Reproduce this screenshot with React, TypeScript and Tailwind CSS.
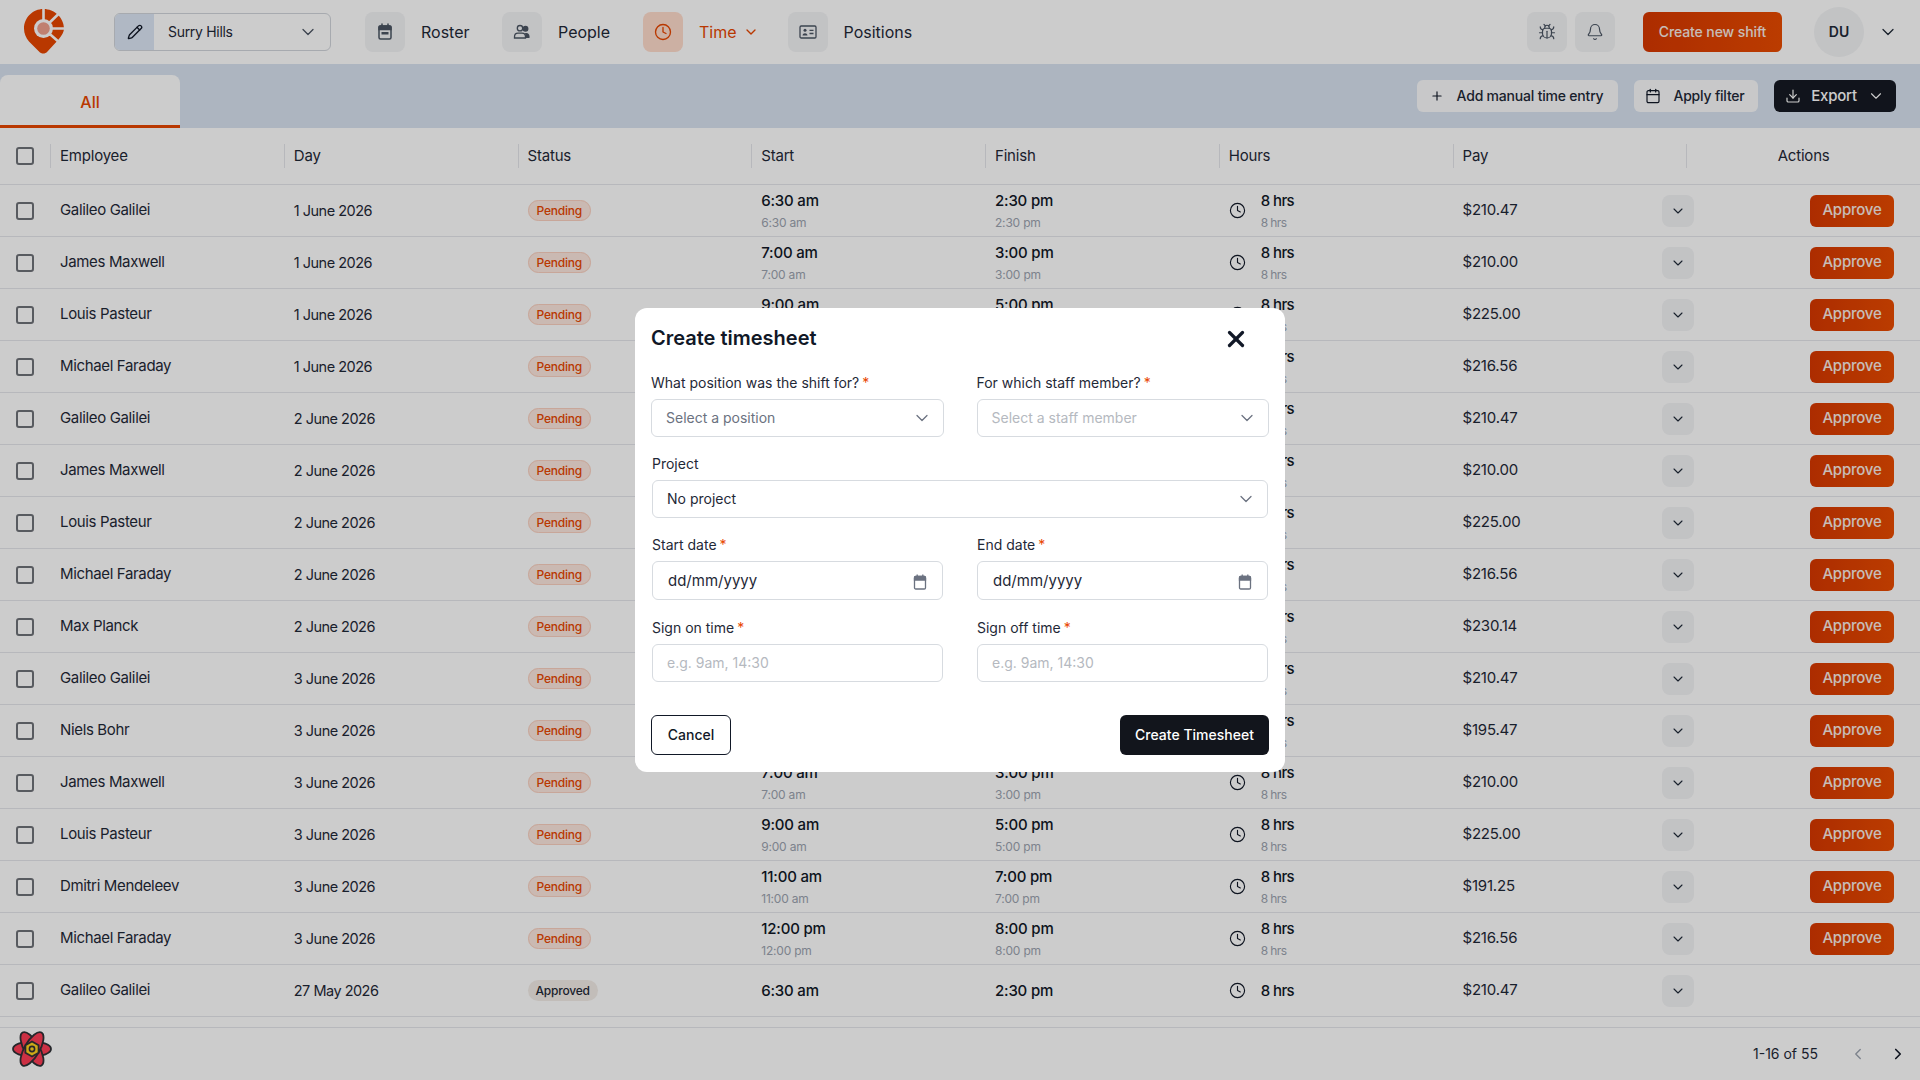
import { Bell, Bug, Calendar, ChevronDown, ChevronLeft, ChevronRight, Clock, Download, Pencil, Plus, X } from "lucide-react";
import { ReactNode } from "react";

type Row = { name: string; day: string; start: string; finish: string; pay: string; approved?: boolean };

const rows: Row[] = [
  { name: "Galileo Galilei", day: "1 June 2026", start: "6:30 am", finish: "2:30 pm", pay: "$210.47" },
  { name: "James Maxwell", day: "1 June 2026", start: "7:00 am", finish: "3:00 pm", pay: "$210.00" },
  { name: "Louis Pasteur", day: "1 June 2026", start: "9:00 am", finish: "5:00 pm", pay: "$225.00" },
  { name: "Michael Faraday", day: "1 June 2026", start: "12:00 pm", finish: "8:00 pm", pay: "$216.56" },
  { name: "Galileo Galilei", day: "2 June 2026", start: "6:30 am", finish: "2:30 pm", pay: "$210.47" },
  { name: "James Maxwell", day: "2 June 2026", start: "7:00 am", finish: "3:00 pm", pay: "$210.00" },
  { name: "Louis Pasteur", day: "2 June 2026", start: "9:00 am", finish: "5:00 pm", pay: "$225.00" },
  { name: "Michael Faraday", day: "2 June 2026", start: "12:00 pm", finish: "8:00 pm", pay: "$216.56" },
  { name: "Max Planck", day: "2 June 2026", start: "10:00 am", finish: "6:00 pm", pay: "$230.14" },
  { name: "Galileo Galilei", day: "3 June 2026", start: "6:30 am", finish: "2:30 pm", pay: "$210.47" },
  { name: "Niels Bohr", day: "3 June 2026", start: "8:00 am", finish: "4:00 pm", pay: "$195.47" },
  { name: "James Maxwell", day: "3 June 2026", start: "7:00 am", finish: "3:00 pm", pay: "$210.00" },
  { name: "Louis Pasteur", day: "3 June 2026", start: "9:00 am", finish: "5:00 pm", pay: "$225.00" },
  { name: "Dmitri Mendeleev", day: "3 June 2026", start: "11:00 am", finish: "7:00 pm", pay: "$191.25" },
  { name: "Michael Faraday", day: "3 June 2026", start: "12:00 pm", finish: "8:00 pm", pay: "$216.56" },
  { name: "Galileo Galilei", day: "27 May 2026", start: "6:30 am", finish: "2:30 pm", pay: "$210.47", approved: true },
];

const columns = ["Employee", "Day", "Status", "Start", "Finish", "Hours", "Pay"];

const Logo = () => (
  <svg width="40" height="45" viewBox="0 0 40 45" className="ml-[24px] mt-[9px] shrink-0 self-start">
    <path d="M19.5 0C8.7 0 0 8.7 0 19.5c0 5 2 9.5 5 13L15 42.5c2.5 2.8 6 2.8 8.5 0l11-12C38 26 40 23 40 19.5 40 8.7 30.3 0 19.5 0Z" fill="#e84600" />
    <path d="M19.5 19.5V-2M19.5 19.5L36 3.5M19.5 19.5H42M19.5 19.5L36 34" stroke="#fff" strokeWidth="2.6" fill="none" />
    <circle cx="19.5" cy="19.5" r="9.5" fill="#fff" />
    <circle cx="19.5" cy="19.5" r="6.3" fill="#f0a08c" />
  </svg>
);

const AtomLogo = () => (
  <svg width="40" height="36" viewBox="0 0 40 36" className="ml-[12px] mt-[3px]">
    <g fill="#ff3d55" stroke="#2f3136" strokeWidth="1.8">
      <ellipse cx="20" cy="18" rx="19" ry="7.5" />
      <ellipse cx="20" cy="18" rx="19" ry="7.5" transform="rotate(60 20 18)" />
      <ellipse cx="20" cy="18" rx="19" ry="7.5" transform="rotate(120 20 18)" />
    </g>
    <polygon points="20,9.5 27.5,13.7 27.5,22.3 20,26.5 12.5,22.3 12.5,13.7" fill="#2f3136" />
    <polygon points="20,11.5 25.7,14.8 25.7,21.2 20,24.5 14.3,21.2 14.3,14.8" fill="#ffd21f" />
    <circle cx="20" cy="18" r="3.4" fill="#2f3136" />
    <circle cx="20" cy="18" r="1.8" fill="#ffd21f" />
  </svg>
);

const RosterIcon = () => (
  <svg width="20" height="20" viewBox="0 0 20 20" fill="none" stroke="#4b5563" strokeWidth="1.5">
    <rect x="4" y="4" width="12" height="13" rx="1.5" />
    <path d="M4 7.5h12V5.2A1.2 1.2 0 0 0 14.8 4H5.2A1.2 1.2 0 0 0 4 5.2Z" fill="#4b5563" />
    <path d="M7 2v2.500M13 2v2.500" strokeLinecap="round" />
    <rect x="6.5" y="10" width="7" height="2.5" fill="#4b5563" stroke="none" />
  </svg>
);

const PeopleIcon = () => (
  <svg width="20" height="20" viewBox="0 0 20 20" fill="none" stroke="#4b5563" strokeWidth="1.3">
    <circle cx="8" cy="6.2" r="2.7" />
    <circle cx="13.5" cy="6.8" r="2.3" fill="#4b5563" />
    <path d="M2.5 16v-1c0-2.2 1.500-3.800 3.500-3.800h4c2 0 3.500 1.600 3.500 3.800v1Z" />
    <path d="M13 11h1.500c1.700 0 3 1.400 3 3.200V16h-3.500Z" fill="#4b5563" stroke="none" />
  </svg>
);

const PositionsIcon = () => (
  <svg width="20" height="20" viewBox="0 0 20 20" fill="none" stroke="#4b5563" strokeWidth="1.3">
    <rect x="2" y="4" width="16" height="12" rx="1.2" />
    <circle cx="7" cy="8.3" r="1.5" fill="#4b5563" stroke="none" />
    <path d="M4.5 13.500c.2-1.500 1.200-2.300 2.500-2.300s2.300.8 2.500 2.300Z" fill="#4b5563" stroke="none" />
    <path d="M11.5 8.3h4M11.5 11.500h4" />
  </svg>
);

const DateIcon = () => (
  <svg width="14" height="18" viewBox="0 0 14 18" fill="none" stroke="#6b7280" strokeWidth="1.3">
    <rect x="1.5" y="3.5" width="11" height="12.5" rx="1.2" />
    <path d="M1.5 7V4.700a1.200 1.200 0 0 1 1.200-1.200h8.600a1.200 1.200 0 0 1 1.200 1.200V7Z" fill="#6b7280" />
    <path d="M4.200 1.500v2.500M9.800 1.500v2.500" />
  </svg>
);

const Tile = ({ children, active }: { children: ReactNode; active?: boolean }) => (
  <div className={`flex h-10 w-10 items-center justify-center rounded-lg ${active ? "bg-[#ffdccc]" : "bg-[#f3f4f6]"}`}>
    {children}
  </div>
);

const Checkbox = () => <div className="h-[18px] w-[18px] rounded-[3px] border-2 border-[#6f7278] bg-white" />;

const Header = () => (
  <header className="flex h-16 shrink-0 bg-white">
    <Logo />
    <div className="ml-[50px] mt-[13px] flex h-[38px] w-[217px] overflow-hidden rounded-md border border-[#d1d5db] text-sm text-[#1f2937]">
      <div className="flex w-[39px] items-center justify-center bg-[#dce6f5]">
        <Pencil size={16} color="#111827" />
      </div>
      <div className="flex flex-1 items-center justify-between pl-[14px] pr-[12px]">
        <span className="tracking-[-0.3px]">Surry Hills</span>
        <ChevronDown size={20} strokeWidth={1.5} color="#4b5563" />
      </div>
    </div>
    <nav className="ml-[34px] mt-3 flex h-10 items-center text-base text-[#1f2937]">
      <Tile><RosterIcon /></Tile>
      <span className="ml-4 w-[81px]">Roster</span>
      <Tile><PeopleIcon /></Tile>
      <span className="ml-4 w-[85px]">People</span>
      <Tile active><Clock size={18} color="#e84600" strokeWidth={1.8} /></Tile>
      <span className="ml-4 text-[#e84600]">Time</span>
      <ChevronDown size={16} color="#e84600" className="ml-[6px] mr-[29px]" />
      <Tile><PositionsIcon /></Tile>
      <span className="ml-4">Positions</span>
    </nav>
    <div className="ml-auto mt-3 flex h-10 items-start">
      <Tile><Bug size={18} strokeWidth={1.6} color="#4b5563" /></Tile>
      <div className="ml-2"><Tile><Bell size={18} strokeWidth={1.6} color="#4b5563" /></Tile></div>
      <button className="ml-7 h-10 w-[139px] rounded-md bg-gradient-to-r from-[#d83800] to-[#ea4b00] text-sm font-medium tracking-[-0.1px] text-[#f9ece6]">
        Create new shift
      </button>
      <div className="ml-8 mt-[-5px] flex h-[50px] w-[50px] items-center justify-center rounded-full bg-[#f3f4f6] text-sm font-semibold text-[#1f2937]">DU</div>
      <ChevronDown size={20} strokeWidth={1.5} color="#1f2937" className="ml-[14px] mr-[22px] mt-[10px]" />
    </div>
  </header>
);

const Toolbar = () => (
  <div className="flex h-16 shrink-0 items-start bg-[#d9e3f1]">
    <div className="mt-[11px] flex h-[53px] w-[180px] items-center justify-center rounded-t-lg border-b-[3px] border-[#e84600] bg-white pt-[4px] text-base font-medium text-[#e84600]">
      All
    </div>
    <div className="ml-auto mr-6 mt-4 flex h-8 gap-4 text-sm font-medium text-[#1f2937]">
      <button className="flex w-[201px] items-center justify-center gap-[13px] rounded-md bg-[#fafbfc] pr-[2px] tracking-[-0.2px]">
        <Plus size={14} strokeWidth={2} color="#111827" />
        Add manual time entry
      </button>
      <button className="flex w-[124px] items-center justify-center gap-[12px] rounded-md bg-[#fafbfc] pr-[2px] tracking-[-0.2px]">
        <Calendar size={16} strokeWidth={1.8} color="#111827" />
        Apply filter
      </button>
      <button className="flex w-[122px] items-center justify-center rounded-md bg-[#161a23] text-[15px] tracking-[-0.2px] text-white">
        <Download size={16} strokeWidth={1.8} className="mr-[10px]" />
        Export
        <ChevronDown size={18} strokeWidth={1.5} className="ml-[10px]" />
      </button>
    </div>
  </div>
);

const Badge = ({ approved }: { approved?: boolean }) =>
  approved ? (
    <span className="rounded-full bg-[#f3ede8] px-2 py-[3px] text-xs font-medium leading-4 text-[#1f2937]">Approved</span>
  ) : (
    <span className="rounded-full border border-[#fbd0c0] bg-[#fde8df] px-2 py-[2px] text-xs font-medium leading-4 text-[#e84600]">Pending</span>
  );

const TimeCell = ({ main, sub }: { main: string; sub: string | false }) => (
  <div className="flex flex-col">
    <span className="text-[15px] font-medium leading-5 text-[#111827]">{main}</span>
    {sub && <span className="mt-[4px] text-xs leading-4 text-[#9ca3af]">{sub}</span>}
  </div>
);

const Table = () => (
  <div className="flex-1 overflow-hidden text-[15px] tracking-[-0.2px] text-[#1f2937]">
    <div className="grid h-[57px] grid-cols-[50px_repeat(8,1fr)] items-center border-b border-[#e5e7eb]">
      <div className="flex justify-center"><Checkbox /></div>
      {columns.map((c) => (
        <div key={c} className="flex h-6 items-center border-l border-[#e5e7eb] pl-[9px]">{c}</div>
      ))}
      <div className="flex h-6 items-center justify-center border-l border-[#e5e7eb]">Actions</div>
    </div>
    {rows.map((r, i) => (
      <div key={i} className="grid h-[52px] grid-cols-[50px_repeat(8,1fr)] items-center border-b border-[#e5e7eb]">
        <div className="flex justify-center"><Checkbox /></div>
        <div className="pl-[10px] tracking-[-0.35px]">{r.name}</div>
        <div className="pl-[10px] text-[14.5px] tracking-[-0.5px]">{r.day}</div>
        <div className="pl-[10px]"><Badge approved={r.approved} /></div>
        <div className="pl-[10px]"><TimeCell main={r.start} sub={!r.approved && r.start} /></div>
        <div className="pl-[10px]"><TimeCell main={r.finish} sub={!r.approved && r.finish} /></div>
        <div className="flex items-center pl-[10px] tracking-[-0.6px]">
          <Clock size={17} strokeWidth={1.6} color="#111827" className="mr-[15px]" />
          <TimeCell main="8 hrs" sub={!r.approved && "8 hrs"} />
        </div>
        <div className="flex items-center justify-between pl-[10px]">
          <span>{r.pay}</span>
          <div className="mr-[-8px] flex h-8 w-8 items-center justify-center rounded-lg bg-[#f3f4f6]">
            <ChevronDown size={16} strokeWidth={1.6} color="#1f2937" />
          </div>
        </div>
        <div className="flex justify-end pr-[26px]">
          {!r.approved && (
            <button className="h-8 w-[84px] rounded-md bg-gradient-to-r from-[#d83800] to-[#ea4b00] text-[15px] font-medium text-[#f9ece6]">
              Approve
            </button>
          )}
        </div>
      </div>
    ))}
  </div>
);

const Footer = () => (
  <footer className="flex h-[53px] shrink-0 border-t border-[#e5e7eb] bg-white">
    <AtomLogo />
    <div className="ml-auto flex items-center pr-[13px] text-sm text-[#1f2937]">
      <span>1-16 of 55</span>
      <ChevronLeft size={18} strokeWidth={1.8} color="#9ca3af" className="ml-[31px]" />
      <ChevronRight size={18} strokeWidth={2.2} color="#111827" className="ml-[22px]" />
    </div>
  </footer>
);

const Label = ({ text, required }: { text: string; required?: boolean }) => (
  <div className="mb-[6px] h-5 text-sm leading-5 text-[#1f2937]">
    {text}
    {required && <span className="ml-[3px] text-[#e84600]">*</span>}
  </div>
);

const SelectBox = ({ text, muted }: { text: string; muted?: "mid" | "light" }) => (
  <div className="flex h-[38px] items-center justify-between rounded-md border border-[#d7dbe0] pl-[14px] pr-[11px] text-sm">
    <span className={muted === "mid" ? "text-[#6b7280]" : muted === "light" ? "text-[#b5b9c0]" : "text-[#1f2937]"}>{text}</span>
    <ChevronDown size={20} strokeWidth={1.5} color="#6b7280" />
  </div>
);

const DateBox = () => (
  <div className="mt-px flex h-[39px] items-center justify-between rounded-md border border-[#d7dbe0] pl-[15px] pr-[15px] pt-[2px] text-[15px] text-[#1f2937]">
    <span>dd/mm/yyyy</span>
    <DateIcon />
  </div>
);

const TimeBox = () => (
  <div className="mt-px flex h-[38px] items-center rounded-md border border-[#d7dbe0] pl-[14px] text-sm text-[#b5b9c0]">
    e.g. 9am, 14:30
  </div>
);

const Modal = () => (
  <div className="absolute inset-0 flex items-center justify-center bg-black/20">
    <div className="flex h-[464px] w-[650px] flex-col rounded-xl bg-white p-4 text-[#1f2937]">
      <div className="flex h-7 items-center justify-between">
        <h2 className="text-xl font-semibold text-[#111827]">Create timesheet</h2>
        <X size={26} strokeWidth={3} color="#111827" className="mr-[20px] mt-[2px]" />
      </div>
      <div className="mt-[21px] grid grid-cols-2 gap-x-[33px]">
        <div><Label text="What position was the shift for?" required /><SelectBox text="Select a position" muted="mid" /></div>
        <div><Label text="For which staff member?" required /><SelectBox text="Select a staff member" muted="light" /></div>
      </div>
      <div className="mx-px mt-[17px]">
        <Label text="Project" />
        <SelectBox text="No project" />
      </div>
      <div className="mx-px mt-[17px] grid grid-cols-2 gap-x-[34px]">
        <div><Label text="Start date" required /><DateBox /></div>
        <div><Label text="End date" required /><DateBox /></div>
      </div>
      <div className="mx-px mt-[18px] grid grid-cols-2 gap-x-[34px]">
        <div><Label text="Sign on time" required /><TimeBox /></div>
        <div><Label text="Sign off time" required /><TimeBox /></div>
      </div>
      <div className="mt-[33px] flex justify-between">
        <button className="h-10 w-20 rounded-md border border-[#111827] text-sm font-medium text-[#111827]">Cancel</button>
        <button className="h-10 w-[149px] rounded-md bg-[#12151c] text-sm font-medium text-white">Create Timesheet</button>
      </div>
    </div>
  </div>
);

export default function App() {
  return (
    <div className="relative flex h-screen flex-col overflow-hidden bg-white font-['Inter',sans-serif]">
      <Header />
      <Toolbar />
      <Table />
      <Footer />
      <Modal />
    </div>
  );
}
